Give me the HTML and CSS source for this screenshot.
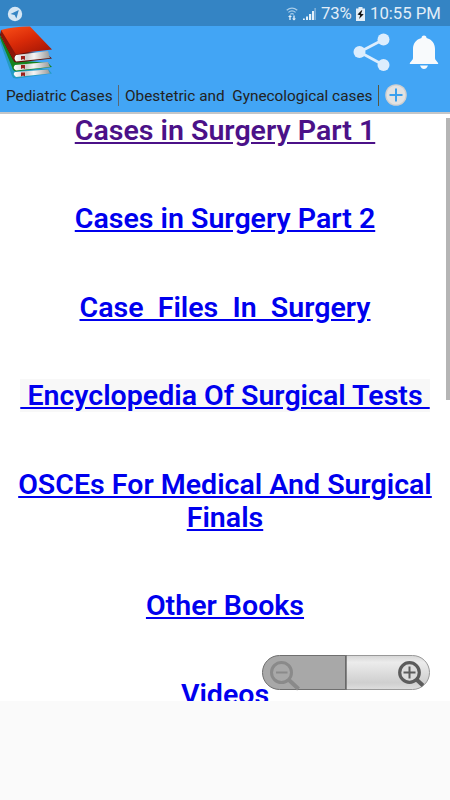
FILE: index.html
```html
<!DOCTYPE html>
<html lang="en">
<head>
<meta charset="utf-8">
<title>Surgery Cases</title>
<link rel="stylesheet" href="styles.css">
</head>
<body>
<div class="status">
  <svg class="telegram" width="16" height="16" viewBox="0 0 16 16"><circle cx="8" cy="8" r="7.2" fill="#d5e6f4"/><path d="M3.5 7.9 11.8 4 9.4 12.4 7.6 8.9Z" fill="#3484c4"/></svg>
  <svg class="wifi" width="12" height="14" viewBox="0 0 12 14" fill="none" stroke="#a9cde9" stroke-width="1.2"><path d="M.7 3.3Q6-1.2 11.3 3.3M2.4 5.4Q6 2.4 9.6 5.4M4.2 7.4Q6 6 7.8 7.4"/><path d="M4 13V9M8 8.5v4" stroke="#e5f1fa" stroke-width="1.3"/><path d="m2 10 2-2 2 2ZM6 11.5l2 2 2-2Z" fill="#e5f1fa" stroke="none"/></svg>
  <svg class="signal" width="15" height="14" viewBox="0 0 15 14"><path d="M1 13v-1.500h1.800v1.500zM4 13V9.500h2V13zM7 13V7h2.200v6zM10 13V4h2v9z" fill="#e5f1fa"/><path d="M12.300 13V1H14v12z" fill="#78add8"/></svg>
  <span class="percent">73%</span>
  <svg class="battery" width="9" height="14" viewBox="0 0 9 14"><path d="M2.5 0h4v1.5H9V14H0V1.5h2.5Z" fill="#e2eef8"/><path d="M5.6 3.3 1.5 7.5l2.7.7-1.2 3.9 4.7-4.9-2.8-.5 1.4-3.2Z" fill="#111"/></svg>
  <span class="clock">10:55 PM</span>
</div>
<header class="bar">
  <div class="actions">
    <svg class="books" width="54" height="54" viewBox="0 0 54 54">
      <defs>
        <linearGradient id="red" x1="0" y1="0" x2=".6" y2="1"><stop offset="0" stop-color="#fb5018"/><stop offset=".5" stop-color="#d92a08"/><stop offset="1" stop-color="#a01505"/></linearGradient>
        <linearGradient id="page"><stop offset="0" stop-color="#fff"/><stop offset=".35" stop-color="#ccc"/><stop offset=".55" stop-color="#f5f5f5"/><stop offset="1" stop-color="#999"/></linearGradient>
      </defs>
      <path d="M0 16 12 50Q13 53 17 52.500L52 47.500 48 43 14 40 1 12Z" fill="#249bc4"/>
      <path d="M15 46 48 43.500 50 47.500 16 51Q12 48 15 46Z" fill="url(#page)"/>
      <path d="M0 12 12 41Q13 46 17 45.300L52 41 48 37 14 34 1 7Z" fill="#15831f"/>
      <path d="M15 39 48 36 50 41 16 44.500Q12 42 15 39Z" fill="url(#page)"/>
      <path d="M1 4 0 9 13 34Q14 37 18 36.500L52 32.500 47 28 17 25Z" fill="#630f07"/>
      <path d="M16 29Q13 32 16 35.500L50 32 48 25Z" fill="url(#page)"/>
      <path d="M1 4Q14 .3 30 .5L52 23.500Q34 25 16 28.500Q13 31 14 34L1 10Z" fill="url(#red)"/>
      <path d="M1 4 16 28.500Q13 31 14 34L1 10Z" fill="#8a1607"/>
      <path d="M21 30h4v4l-2-1-2 1zM21 39h4v4l-2-1-2 1zM21 46.500h4v4l-2-1-2 1z" fill="#9b211c"/>
    </svg>
    <svg class="share" width="38" height="40" viewBox="0 0 38 40"><path d="M30.500 7.500 6.500 20 30.500 33" fill="none" stroke="#dcedfd" stroke-width="2.800"/><g fill="#dcedfd"><circle cx="30.500" cy="7.500" r="6"/><circle cx="6.500" cy="20" r="6"/><circle cx="30.500" cy="33" r="6"/></g></svg>
    <svg class="bell" width="30" height="34" viewBox="0 0 30 34"><path d="M12.500 3a2.500 2.500 0 0 1 5 0C23 4.500 26 8.500 26 14v9c0 2.500 3 3.500 3.300 6H.7C1 26.500 4 25.500 4 23v-9C4 8.500 7 4.500 12.500 3ZM11 30.500h8Q17.500 34 15 34T11 30.500Z" fill="#f8fafc"/></svg>
  </div>
  <nav class="tabs">
    <span class="tab pediatric">Pediatric Cases</span>
    <span class="tab obstetric">Obestetric and&nbsp; Gynecological cases</span>
    <svg class="add" width="22" height="22" viewBox="0 0 22 22"><circle cx="11" cy="11" r="10.800" fill="#cfcfcf"/><circle cx="11" cy="11" r="9.500" fill="#e2e2e2"/><path d="M11 4.500v13M4.500 11h13" stroke="#3ba0ee" stroke-width="2"/></svg>
  </nav>
</header>
<main class="view">
  <div class="links">
    <a class="visited">Cases in Surgery Part 1</a>
    <a>Cases in Surgery Part 2</a>
    <a>Case&nbsp; Files&nbsp; In&nbsp; Surgery</a>
    <a class="shaded">&nbsp;Encyclopedia Of Surgical Tests&nbsp;</a>
    <a>OSCEs For Medical And Surgical Finals</a>
    <a>Other Books</a>
    <a>Videos</a>
  </div>
  <div class="scrollbar"></div>
  <svg class="zoom" width="170" height="38" viewBox="0 0 170 38">
    <defs><linearGradient id="face" x1="0" y1="0" x2="0" y2="1"><stop offset="0" stop-color="#d5d5d5"/><stop offset=".2" stop-color="#ececec"/><stop offset=".8" stop-color="#cfcfcf"/><stop offset="1" stop-color="#dedede"/></linearGradient></defs>
    <path d="M85 1.500h66.500a17 17 0 0 1 0 34H85Z" fill="url(#face)" stroke="#999"/>
    <path d="M84.500 1.500h-66a17 17 0 0 0 0 34h66Z" fill="#a8a8a8" stroke="#6f6f6f"/>
    <path d="M85 1v35" stroke="#666" stroke-width="1.200"/>
    <g fill="none" stroke="#8a8a8a"><circle cx="20.500" cy="18.500" r="10" stroke-width="3"/><path d="M15 18.500h11.500" stroke-width="2"/><path d="m28 26 9.500 9" stroke-width="4"/></g>
    <g fill="none" stroke="#5c5c5c"><circle cx="148.500" cy="18.500" r="9.800" fill="#ddd" stroke-width="3.200"/><path d="M142.500 18.500h12M148.500 12.500v12" stroke-width="2"/><path d="m156 26 6 5.500" stroke-width="4"/></g>
  </svg>
</main>
</body>
</html>
```
FILE: styles.css
```css
body {
  margin: 0;
  width: 450px;
  height: 800px;
  overflow: hidden;
  background: #fafafa;
  font-family: Roboto, sans-serif;
}

svg {
  display: block;
  flex: none;
}

.status {
  display: flex;
  align-items: center;
  box-sizing: border-box;
  height: 26px;
  padding: 1px 0 0 7px;
  background: #3484c4;
  color: #e2eef8;
  font-size: 16.7px;
  line-height: 26px;
  white-space: nowrap;
}

.wifi {
  margin-left: 263px;
}

.signal {
  margin-left: 4px;
}

.percent {
  width: 31px;
  margin-left: 4px;
  letter-spacing: -0.1px;
}

.battery {
  margin-left: 4px;
}

.clock {
  margin-left: 5px;
}

.bar {
  box-sizing: border-box;
  height: 88px;
  background: #42a5f5;
  border-bottom: 2px solid #c4c6c8;
}

.actions {
  display: flex;
  height: 54px;
}

.share {
  margin: 6px 0 0 299px;
}

.bell {
  margin: 9px 0 0 18px;
}

.tabs {
  display: flex;
  align-items: center;
  height: 32px;
  padding-left: 6px;
  color: #222;
  font-size: 15.35px;
  line-height: 22px;
  white-space: nowrap;
}

.tab {
  box-sizing: border-box;
  height: 21px;
  margin-top: -1px;
  border-right: 1px solid #5c6770;
}

.pediatric {
  width: 113px;
}

.obstetric {
  width: 254px;
  margin-left: 6px;
  border-color: #59563d;
}

.add {
  margin: -2px 0 0 6px;
}

.view {
  position: relative;
  height: 587px;
  overflow: hidden;
  background: #fff;
}

.links {
  display: flex;
  flex-direction: column;
  align-items: center;
  gap: 55.5px;
  margin-top: -0.5px;
  padding: 0 16px;
  font-size: 28.55px;
  font-weight: 600;
  line-height: 33px;
  text-align: center;
}

.links a {
  color: #0000ee;
  text-decoration: underline;
}

.links .visited {
  color: #4b1188;
}

.links .shaded {
  background: #f8f8f8;
}

.scrollbar {
  position: absolute;
  top: 4px;
  right: 0;
  width: 4px;
  height: 282px;
  background: #b5b5b5;
}

.zoom {
  position: absolute;
  top: 540px;
  left: 261px;
}
```
